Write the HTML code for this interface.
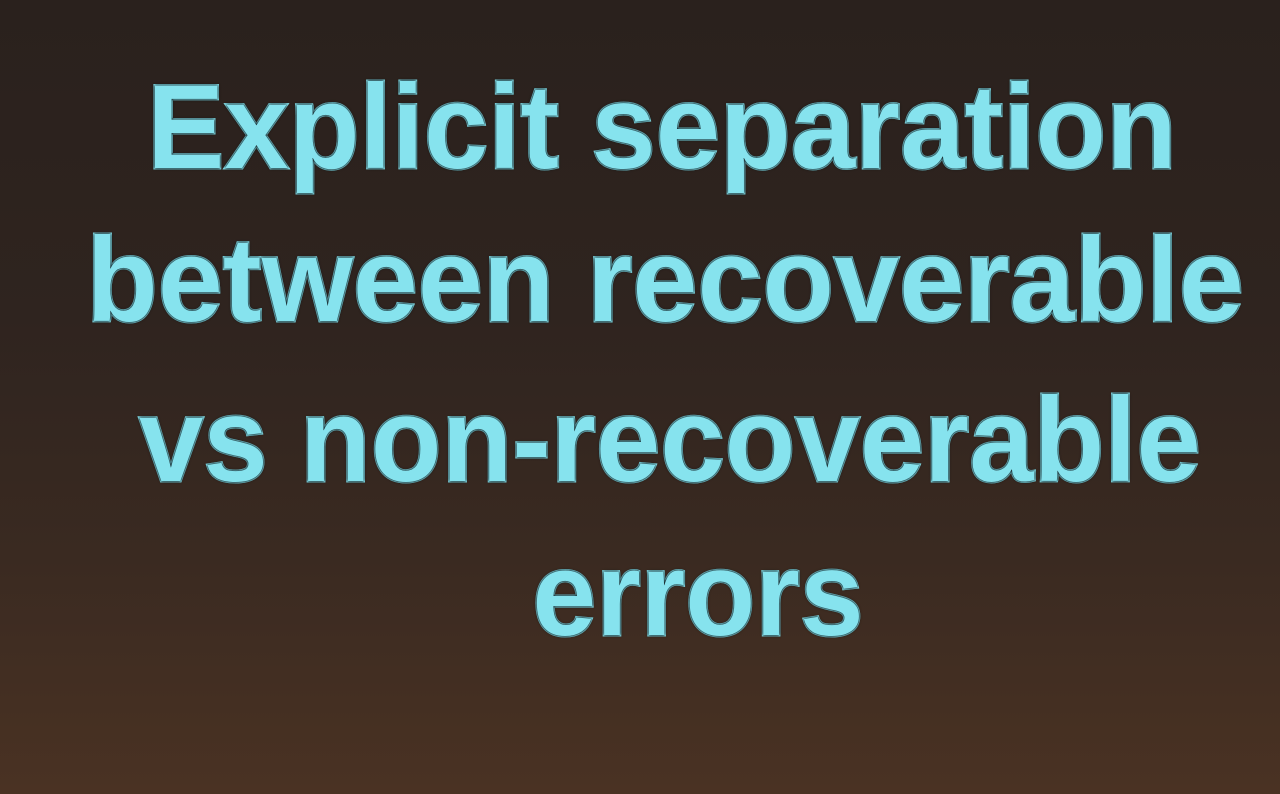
<!DOCTYPE html>
<html><head><meta charset="utf-8"><style>
html,body{margin:0;padding:0}
body{width:1280px;height:794px;overflow:hidden;position:relative;
background:linear-gradient(180deg,#2a211d 0%,#2f241f 40%,#3a2a21 70%,#4a3223 100%);}
.l{position:absolute;left:0;width:0;height:118px;}
.l span{position:absolute;left:0;top:0;white-space:nowrap;
font-family:"Liberation Sans",sans-serif;font-weight:bold;font-size:120px;line-height:118px;
color:#86e3ee;-webkit-text-stroke:3px #86e3ee;paint-order:stroke fill;
text-shadow:0 0 3px #0a1418,0 0 2px #0a1418;}
</style></head><body>
<div class="l" style="top:68px;left:662px"><span style="transform:translateX(-50%) scaleX(0.965)">Explicit separation</span></div>
<div class="l" style="top:221px;left:665px"><span style="transform:translateX(-50%) scaleX(0.975)">between recoverable</span></div>
<div class="l" style="top:381px;left:670px"><span style="transform:translateX(-50%) scaleX(0.965)">vs non-recoverable</span></div>
<div class="l" style="top:535px;left:698px"><span style="transform:translateX(-50%) scaleX(0.955)">errors</span></div>
</body></html>
